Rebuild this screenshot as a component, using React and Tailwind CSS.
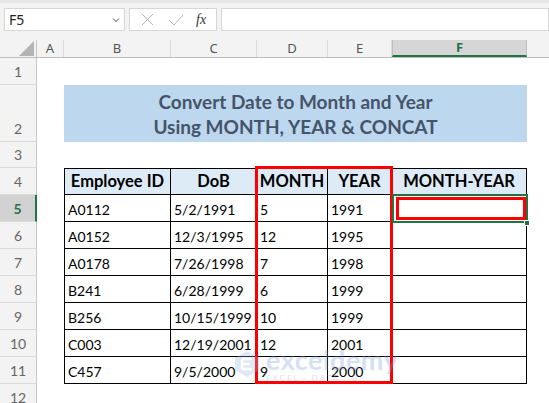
import React from "react";

const cols = [
  { key: "A", w: "w-[27px]" },
  { key: "B", w: "w-[107px]" },
  { key: "C", w: "w-[86px]" },
  { key: "D", w: "w-[71px]" },
  { key: "E", w: "w-[64px]" },
  { key: "F", w: "w-[135px]" },
];

const data = [
  ["A0112", "5/2/1991", "5", "1991"],
  ["A0152", "12/3/1995", "12", "1995"],
  ["A0178", "7/26/1998", "7", "1998"],
  ["B241", "6/28/1999", "6", "1999"],
  ["B256", "10/15/1999", "10", "1999"],
  ["C003", "12/19/2001", "12", "2001"],
  ["C457", "9/5/2000", "9", "2000"],
];

const headers = ["Employee ID", "DoB", "MONTH", "YEAR", "MONTH-YEAR"];
const widths = ["w-[107px]", "w-[86px]", "w-[71px]", "w-[64px]", "w-[135px]"];

const RowNum = ({ n, h, active }) => (
  <div
    className={`w-[37px] ${h} shrink-0 flex items-center justify-center border-b border-[#dadada] text-[14px] ${
      active
        ? "bg-[#d2d2d2] text-[#217346] font-bold border-r-2 border-r-[#217346]"
        : "bg-[#f3f3f3] text-[#666] border-r border-r-[#c6c6c6]"
    }`}
  >
    {n}
  </div>
);

export default function App() {
  return (
    <div
      className="w-[549px] h-[403px] overflow-hidden bg-white relative"
      style={{ fontFamily: "Lato, 'Noto Sans', sans-serif" }}
    >
      {/* formula bar */}
      <div className="h-[40px] bg-[#f3f3f3] border-t-[3px] border-[#e6e6e6] flex items-start pt-[5px] gap-[4px] pl-[4px]">
        <div className="w-[121px] h-[23px] bg-white border border-[#d6d6d6] flex items-center justify-between px-[4px] text-[14px] text-[#222]">
          <span style={{ fontFamily: "'Segoe UI', 'Noto Sans', sans-serif" }}>F5</span>
          <svg width="8" height="6" viewBox="0 0 8 6">
            <path d="M1 1.5 L4 4.5 L7 1.5" fill="none" stroke="#444" strokeWidth="1" />
          </svg>
        </div>
        <div className="w-[88px] h-[23px] bg-white border border-[#d6d6d6] flex items-center">
          <svg className="ml-[11px]" width="13" height="13" viewBox="0 0 13 13">
            <path d="M1 1 L12 12 M12 1 L1 12" stroke="#b4b4b4" strokeWidth="1" />
          </svg>
          <svg className="ml-[14px]" width="16" height="12" viewBox="0 0 16 12">
            <path d="M1 6 L6 11 L15 1" fill="none" stroke="#b4b4b4" strokeWidth="1" />
          </svg>
          <span
            className="ml-[12px] text-[14px] italic text-[#333]"
            style={{ fontFamily: "'Liberation Serif', serif" }}
          >
            fx
          </span>
        </div>
        <div className="flex-1 h-[23px] bg-white border border-[#d6d6d6]" />
      </div>

      {/* column headers */}
      <div
        className="h-[18px] flex bg-[#f3f3f3] border-b border-[#bdbdbd] text-[13px] text-[#555]"
        style={{ fontFamily: "'Segoe UI', 'Noto Sans', sans-serif" }}
      >
        <div className="w-[37px] shrink-0 border-r border-[#c6c6c6] flex items-end justify-end pr-[2px] pb-[1px]">
          <div className="w-0 h-0 border-l-[15px] border-l-transparent border-b-[15px] border-b-[#b4b4b4]" />
        </div>
        {cols.map((c) =>
          c.key === "F" ? (
            <div
              key={c.key}
              className={`${c.w} shrink-0 bg-[#d6d6d6] border-b-2 border-[#217346] border-x border-x-[#bdbdbd] flex items-center justify-center font-bold text-[#217346]`}
            >
              {c.key}
            </div>
          ) : (
            <div
              key={c.key}
              className={`${c.w} shrink-0 border-r border-[#dadada] flex items-center justify-center`}
            >
              {c.key}
            </div>
          )
        )}
        <div className="flex-1" />
      </div>

      {/* sheet */}
      <div className="relative">
        <div className="flex">
          <RowNum n="1" h="h-[27px]" />
        </div>
        <div className="flex">
          <RowNum n="2" h="h-[57px] !items-end pb-[2px]" />
          <div className="w-[27px]" />
          <div className="w-[463px] h-[57px] bg-[#bdd7ee] flex flex-col items-center justify-center text-[19px] font-bold leading-[25px] text-[#44546a]">
            <span>Convert Date to Month and Year</span>
            <span>Using MONTH, YEAR &amp; CONCAT</span>
          </div>
        </div>
        <div className="flex">
          <RowNum n="3" h="h-[26px]" />
        </div>
        <div className="flex">
          <RowNum n="4" h="h-[27px]" />
          <div className="w-[27px]" />
          {headers.map((t, i) => (
            <div
              key={t}
              className={`${widths[i]} h-[27px] bg-[#ddebf7] border-y border-r border-black ${
                i === 0 ? "border-l" : ""
              } flex items-center justify-center text-[16.5px] font-bold text-black`}
            >
              {t}
            </div>
          ))}
        </div>
        {data.map((r, ri) => (
          <div className="flex" key={ri}>
            <RowNum n={String(ri + 5)} h="h-[27px]" active={ri === 0} />
            <div className="w-[27px]" />
            {[...r, ""].map((t, i) => (
              <div
                key={i}
                className={`${widths[i]} h-[27px] border-b border-r border-black ${
                  i === 0 ? "border-l" : ""
                } flex items-center pl-[3px] pt-[2px] text-[14px] text-black`}
              >
                {t}
              </div>
            ))}
          </div>
        ))}
        <div className="flex">
          <RowNum n="12" h="h-[27px]" />
        </div>

        {/* red box around MONTH / YEAR */}
        <div className="absolute left-[255px] top-[108px] w-[138px] h-[218px] border-[3px] border-[#ff0000]" />
        {/* active cell */}
        <div className="absolute left-[392px] top-[136px] w-[136px] h-[29px] border-2 border-[#217346]" />
        <div className="absolute left-[396px] top-[139px] w-[130px] h-[23px] border-[3px] border-[#ff0000]" />
        <div className="absolute left-[524px] top-[162px] w-[6px] h-[6px] bg-[#217346] border border-white" />

        {/* watermark */}
        <div className="absolute left-[232px] top-[288px] flex items-center gap-[4px] opacity-30 pointer-events-none">
          <svg width="30" height="30" viewBox="0 0 30 30">
            <path d="M15 2 L27 9 L27 21 L15 28 L3 21 L3 9 Z" fill="#9fb4e0" />
            <path d="M10 10 L20 10 M10 15 L18 15 M10 20 L20 20 M10 10 L10 20" stroke="#fff" strokeWidth="2.5" fill="none" />
          </svg>
          <div className="flex flex-col leading-none">
            <span className="text-[27px] font-bold text-[#7d9ad8] tracking-[0.5px]">exceldemy</span>
            <span className="text-[8px] text-[#8aa0cf] tracking-[2px] mt-[1px]">EXCEL · DATA · BI</span>
          </div>
        </div>
      </div>
    </div>
  );
}
